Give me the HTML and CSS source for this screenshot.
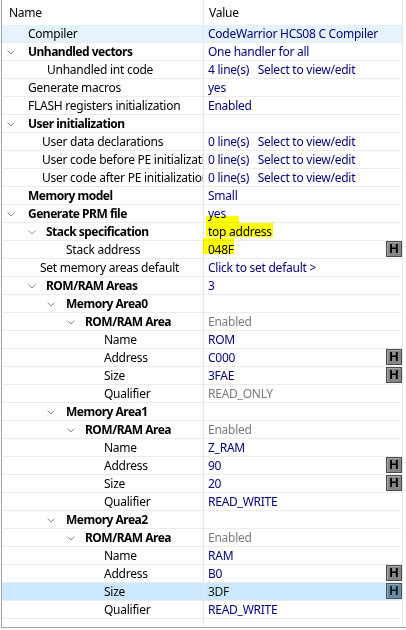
FILE: index.html
```html
<!DOCTYPE html>
<html>
<head>
<meta charset="utf-8">
<link rel="stylesheet" href="styles.css">
</head>
<body>
<div class="tree">
  <div class="head">
    <div class="cn">Name</div>
    <div class="cv">Value</div>
  </div>
  <div class="row hover"><div class="cn i28">Compiler</div><div class="cv"><span>CodeWarrior HCS08 C Compiler</span></div></div>
  <div class="row"><div class="cn x0"><svg class="chev" viewBox="0 0 8 5"><path d="M0.5 0.5L4 4L7.5 0.5"/></svg><span class="b">Unhandled vectors</span></div><div class="cv"><span>One handler for all</span></div></div>
  <div class="row"><div class="cn i47">Unhandled int code</div><div class="cv"><span class="pre">4 line(s)   Select to view/edit</span></div></div>
  <div class="row"><div class="cn i28">Generate macros</div><div class="cv"><span>yes</span></div></div>
  <div class="row"><div class="cn i28">FLASH registers initialization</div><div class="cv"><span>Enabled</span></div></div>
  <div class="row"><div class="cn x0"><svg class="chev" viewBox="0 0 8 5"><path d="M0.5 0.5L4 4L7.5 0.5"/></svg><span class="b">User initialization</span></div><div class="cv"></div></div>
  <div class="row"><div class="cn i42">User data declarations</div><div class="cv"><span class="pre">0 line(s)   Select to view/edit</span></div></div>
  <div class="row"><div class="cn i42"><span class="clip">User code before PE initialization</span></div><div class="cv"><span class="pre">0 line(s)   Select to view/edit</span></div></div>
  <div class="row"><div class="cn i42"><span class="clip">User code after PE initialization</span></div><div class="cv"><span class="pre">0 line(s)   Select to view/edit</span></div></div>
  <div class="row"><div class="cn i28"><span class="b">Memory model</span></div><div class="cv"><span>Small</span></div></div>
  <div class="row"><div class="cn x0"><svg class="chev" viewBox="0 0 8 5"><path d="M0.5 0.5L4 4L7.5 0.5"/></svg><span class="b">Generate PRM file</span></div><div class="cv"><span class="hl hl-yes">yes</span></div></div>
  <div class="row"><div class="cn x1"><svg class="chev" viewBox="0 0 8 5"><path d="M0.5 0.5L4 4L7.5 0.5"/></svg><span class="b">Stack specification</span></div><div class="cv"><span class="hl hl-top">top address</span></div></div>
  <div class="row"><div class="cn i66">Stack address</div><div class="cv"><span class="hl hl-addr">048F</span><span class="hbtn">H</span></div></div>
  <div class="row"><div class="cn i40">Set memory areas default</div><div class="cv"><span>Click to set default &gt;</span></div></div>
  <div class="row"><div class="cn x1"><svg class="chev" viewBox="0 0 8 5"><path d="M0.5 0.5L4 4L7.5 0.5"/></svg><span class="b">ROM/RAM Areas</span></div><div class="cv"><span>3</span></div></div>

  <div class="row"><div class="cn x2"><svg class="chev" viewBox="0 0 8 5"><path d="M0.5 0.5L4 4L7.5 0.5"/></svg><span class="b">Memory Area0</span></div><div class="cv"></div></div>
  <div class="row"><div class="cn x3"><svg class="chev" viewBox="0 0 8 5"><path d="M0.5 0.5L4 4L7.5 0.5"/></svg><span class="b">ROM/RAM Area</span></div><div class="cv"><span class="dim">Enabled</span></div></div>
  <div class="row"><div class="cn i104">Name</div><div class="cv"><span>ROM</span></div></div>
  <div class="row"><div class="cn i104">Address</div><div class="cv"><span>C000</span><span class="hbtn">H</span></div></div>
  <div class="row"><div class="cn i104">Size</div><div class="cv"><span>3FAE</span><span class="hbtn">H</span></div></div>
  <div class="row"><div class="cn i104">Qualifier</div><div class="cv"><span class="dim">READ_ONLY</span></div></div>

  <div class="row"><div class="cn x2"><svg class="chev" viewBox="0 0 8 5"><path d="M0.5 0.5L4 4L7.5 0.5"/></svg><span class="b">Memory Area1</span></div><div class="cv"></div></div>
  <div class="row"><div class="cn x3"><svg class="chev" viewBox="0 0 8 5"><path d="M0.5 0.5L4 4L7.5 0.5"/></svg><span class="b">ROM/RAM Area</span></div><div class="cv"><span class="dim">Enabled</span></div></div>
  <div class="row"><div class="cn i104">Name</div><div class="cv"><span>Z_RAM</span></div></div>
  <div class="row"><div class="cn i104">Address</div><div class="cv"><span>90</span><span class="hbtn">H</span></div></div>
  <div class="row"><div class="cn i104">Size</div><div class="cv"><span>20</span><span class="hbtn">H</span></div></div>
  <div class="row"><div class="cn i104">Qualifier</div><div class="cv"><span>READ_WRITE</span></div></div>

  <div class="row"><div class="cn x2"><svg class="chev" viewBox="0 0 8 5"><path d="M0.5 0.5L4 4L7.5 0.5"/></svg><span class="b">Memory Area2</span></div><div class="cv"></div></div>
  <div class="row"><div class="cn x3"><svg class="chev" viewBox="0 0 8 5"><path d="M0.5 0.5L4 4L7.5 0.5"/></svg><span class="b">ROM/RAM Area</span></div><div class="cv"><span class="dim">Enabled</span></div></div>
  <div class="row"><div class="cn i104">Name</div><div class="cv"><span>RAM</span></div></div>
  <div class="row"><div class="cn i104">Address</div><div class="cv"><span>B0</span><span class="hbtn">H</span></div></div>
  <div class="row selected"><div class="cn i104">Size</div><div class="cv"><span>3DF</span><span class="hbtn">H</span></div></div>
  <div class="row"><div class="cn i104">Qualifier</div><div class="cv"><span>READ_WRITE</span></div></div>
  <div class="filler"><div class="cn"></div><div class="cv"></div></div>
</div>
</body>
</html>
```

FILE: styles.css
```css
* { box-sizing: border-box; }
html, body { margin: 0; padding: 0; background: #fff; }
body {
  font-family: "Noto Sans", "Open Sans", sans-serif;
  font-size: 12px;
  letter-spacing: -0.25px;
  color: #000;
}
.tree {
  margin-left: 1px;
  width: 405px;
  border-left: 1px solid #a3a3a3;
  border-bottom: 1px solid #a3a3a3;
}
.head, .row, .filler {
  display: flex;
  width: 401px;
}
.head { height: 25px; line-height: 25px; }
.head .cn { padding-left: 7px; }
.head .cv { padding-left: 5px; }
.row {
  height: 18px;
  line-height: 17px;
  border-bottom: 1px solid #ececec;
}
.filler { height: 8px; }
.cn {
  width: 202px;
  border-right: 1px solid #e6e6e6;
  display: flex;
  align-items: center;
  overflow: hidden;
  white-space: nowrap;
}
.clip {
  display: block;
  min-width: 0;
  overflow: hidden;
  flex: 1 1 auto;
}
.cv {
  width: 199px;
  border-right: 1px solid #e6e6e6;
  display: flex;
  align-items: stretch;
  padding-left: 4px;
  color: #000080;
  white-space: nowrap;
}
.head .cv { color: #000; }
.cv > span { display: block; }
.pre { white-space: pre; }
.dim { color: #7a7a7a; }
.b { font-weight: bold; letter-spacing: -0.5px; }
.hover { background: #e5f3ff; }
.selected { background: #cce8ff; }
.selected .cv { color: #111; }

.i28 { padding-left: 26px; }
.i40 { padding-left: 38px; }
.i42 { padding-left: 40px; }
.i47 { padding-left: 45px; }
.i66 { padding-left: 64px; }
.i104 { padding-left: 102px; }

.chev {
  width: 8px;
  height: 5px;
  flex: none;
  margin-top: 1px;
}
.chev path { fill: none; stroke: #8a8a8a; stroke-width: 1; }
.x0 { padding-left: 5px; }
.x0 .chev { margin-right: 13px; }
.x1 { padding-left: 26px; }
.x1 .chev { margin-right: 10px; }
.x2 { padding-left: 45px; }
.x2 .chev { margin-right: 11px; }
.x3 { padding-left: 65px; }
.x3 .chev { margin-right: 10px; }

.hbtn {
  margin-left: auto;
  width: 16px;
  height: 16px;
  align-self: flex-start;
  background: #878787;
  border: 1px solid #4a4a4a;
  box-shadow: inset 1px 1px 0 #a6a6a6;
  color: #000;
  font-family: "Liberation Sans", Arial, sans-serif;
  font-weight: bold;
  font-size: 13px;
  letter-spacing: 0;
  line-height: 14px;
  text-align: center;
}
.selected .hbtn {
  background: #6f889b;
  border-color: #40586a;
  box-shadow: inset 1px 1px 0 #8aa3b5;
  color: #0a1b28;
}

.hl { position: relative; }
.hl::after {
  content: "";
  position: absolute;
  background: #ffff00;
  mix-blend-mode: multiply;
}
.hl-yes::after { left: -2px; right: -13px; top: 11px; bottom: -1px; }
.hl-top::after { left: -2px; right: -1px; top: 0; bottom: 3px; }
.hl-addr::after { left: -5px; right: 0; top: -3px; bottom: 4px; }
```
